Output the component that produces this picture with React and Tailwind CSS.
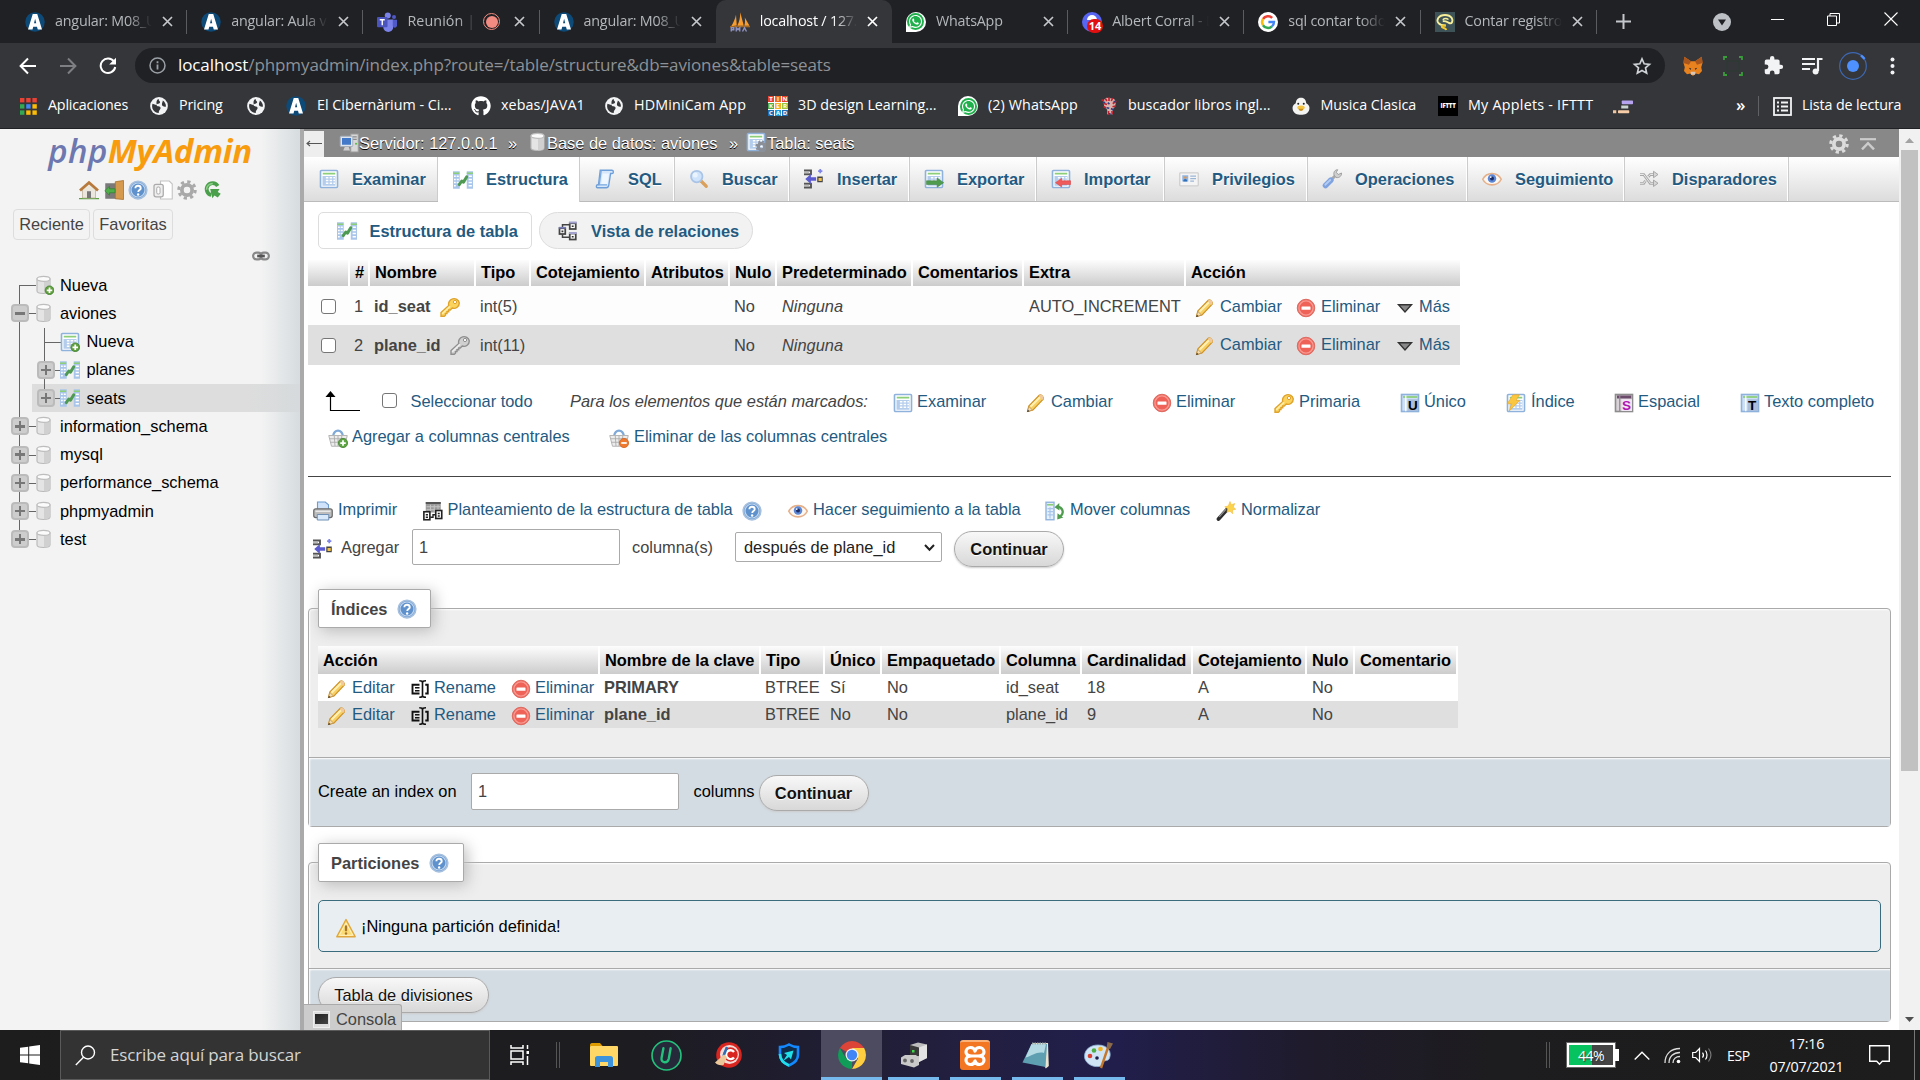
import React from "react";
import { FaGithub, FaWhatsapp } from "react-icons/fa";

/* ---------- small icon toolkit: 16-unit drawings ---------- */
const I = ({ c = "size-5", vb = "0 0 16 16", children }) => (
  <svg viewBox={vb} className={`${c} shrink-0`} fill="none">{children}</svg>
);
const Sheet = () => (
  <>
    <rect x="1.2" y="1.2" width="13.6" height="13.6" rx="0.8" fill="#fff" stroke="#8fb2dd" strokeWidth="1.3" />
    <rect x="3" y="3" width="10" height="1.4" fill="#8ccf78" />
    <rect x="2.8" y="5.6" width="10.4" height="7.8" fill="#b4cdec" />
    <path d="M5.5 7h2M8.5 7h2M11.5 7h1.3M5.5 9.2h2M8.5 9.2h2M11.5 9.2h1.3M5.5 11.4h2M8.5 11.4h2M11.5 11.4h1.3" stroke="#fff" strokeWidth="1.2" />
  </>
);
const Browse = (p) => <I {...p}><Sheet /></I>;
const Structure = (p) => (
  <I {...p}>
    <rect x="0" y="1" width="5.4" height="14" fill="#a9c6ea" />
    <rect x="11" y="1" width="5" height="14" fill="#a9c6ea" />
    <path d="M0 2.5h5M11 2.5h5" stroke="#8ccf78" strokeWidth="1.2" />
    <path d="M.8 5h1.4M3 5h1.6M.8 7.5h1.4M3 7.5h1.6M.8 10h1.4M3 10h1.6M.8 12.5h1.4M12.5 5h2.6M12.5 7.5h2.6M12.5 10h2.6M12.5 12.5h2.6" stroke="#fff" strokeWidth="1.2" />
    <path d="M5 11.7 7 8.8l1.400 .9L11 5.4" stroke="#4f9a52" strokeWidth="2.4" strokeLinecap="round" strokeLinejoin="round" />
  </I>
);
const Sql = () => (
  <I>
    <path d="M4.2 1h9.3c1.6 0 1.6 2.6 0 2.6h-1L11 13c-.3 1.6-1 2-2 2H2c-1.3 0-1.2-2.4.2-2.4h.6z" fill="#d6e7fa" stroke="#6f9fd8" strokeWidth="1.1" />
    <path d="M5 1.2 3.4 12.6h6.2" stroke="#7aaae0" strokeWidth="1" /><path d="M6 3.5h5.2L10 12H5z" fill="#eef6ff" />
  </I>
);
const Search = () => (
  <I>
    <path d="m9.8 9.8 4 4" stroke="#d9a15c" strokeWidth="2.6" strokeLinecap="round" />
    <circle cx="6.2" cy="6" r="4.6" fill="#cfe3fa" stroke="#a9c4e6" strokeWidth="1.4" /><circle cx="5" cy="4.8" r="2" fill="#eaf4ff" />
  </I>
);
const Insert = (p) => (
  <I {...p}>
    <path d="M0 1.2h5.6v3H0M0 11.8h5.6v3H0" stroke="#555" strokeWidth="1.5" />
    <path d="M0 2.7h4M0 13.2h4" stroke="#bbb" strokeWidth="1.2" />
    <path d="M1 8l4.500-4v2.600h4.200v2.800H5.500V12z" fill="#5b5bd0" />
    <rect x="10.600" y="6" width="4.400" height="4.600" fill="#444" /><rect x="11.600" y="7.200" width="2.600" height="2.400" fill="#f2c04c" />
    <path d="M13 0v3.400M11.300 1.700h3.400" stroke="#7f86e8" strokeWidth="1.400" />
  </I>
);
const Export = () => <I><Sheet /><path d="M2 9.4h8.5V7.2l5.2 3.7-5.2 3.7v-2.2H2z" fill="#4f9c4f" stroke="#3a7f3c" strokeWidth=".4" /></I>;
const Import = () => <I><Sheet /><path d="M15.7 9.4H8.5V7.4L3.6 10.9l4.9 3.5v-2h7.2z" fill="#ef5a5a" stroke="#d43c3c" strokeWidth=".4" /></I>;
const Card = () => (
  <I>
    <rect x=".6" y="3" width="14.8" height="10.4" rx=".6" fill="#f4f4f4" stroke="#cfcfcf" />
    <rect x="2.6" y="5" width="4.8" height="5" fill="#8fb6e6" /><circle cx="5" cy="6.8" r="1.1" fill="#d79a5f" /><path d="M3.4 10c0-2.6 3.2-2.6 3.2 0z" fill="#2f6fb8" />
    <path d="M9 5.6h4.6M9 7.6h4.6M9 9.6h3" stroke="#9ab6d6" strokeWidth="1" />
  </I>
);
const Wrench = () => (
  <I>
    <path d="M7.4 8.6 12 4" stroke="#a9a9a9" strokeWidth="2.4" />
    <path d="M9.600 4.800c-.6-2.600 1-4.300 3-4.200l-1.200 2 1.600 1.800 2.600-1.200c.2 2.200-1.600 4.200-4.400 3.600z" fill="#cfcfcf" stroke="#999" strokeWidth=".7" />
    <path d="M2.800 13.200 7 9" stroke="#7fa3e0" strokeWidth="4.400" strokeLinecap="round" /><path d="M2.600 12.600 6.600 8.800" stroke="#b4ccf2" strokeWidth="1.400" strokeLinecap="round" />
  </I>
);
const Eye = (p) => (
  <I {...p}>
    <path d="M.6 8.200C3.600 2.200 12.400 2.200 15.400 8.200 12.400 14.200 3.600 14.200.6 8.200z" fill="#fdf7f2" stroke="#e5b08a" strokeWidth="1.300" />
    <circle cx="8" cy="7.6" r="3.4" fill="#5b87d6" /><circle cx="8" cy="7.6" r="1.6" fill="#1d2d66" /><circle cx="7" cy="6.4" r=".7" fill="#fff" />
  </I>
);
const Shuffle = () => (
  <I>
    <path d="M.8 4.4h3L9 11.4h3M.8 11.4h3l1.4-2M7.4 6.2 9 4.4h3" stroke="#a8a8a8" strokeWidth="2.2" /><path d="M.8 4.4h3L9 11.4h3M.8 11.4h3l1.4-2M7.4 6.2 9 4.4h3" stroke="#e9e9e9" strokeWidth=".8" />
    <path d="M11.6 1.8 15.2 4.4l-3.6 2.6zM11.6 8.8l3.6 2.6-3.6 2.6z" fill="#d5d5d5" stroke="#a0a0a0" strokeWidth=".7" />
  </I>
);
const Relation = () => (
  <I>
    <path d="M3.6 5.4V3H9M3.6 10.6V13H9" stroke="#444" strokeWidth="1.2" />
    <rect x="1.200" y="5.800" width="4.600" height="4.600" fill="#fff" stroke="#444" strokeWidth="1.400" /><path d="M.6 5.400h5.800" stroke="#777bb5" strokeWidth="1.400" />
    <rect x="9.400" y="1.800" width="4.800" height="4.600" fill="#fff" stroke="#444" strokeWidth="1.400" /><path d="M8.800 1.200h6.200" stroke="#a3a2cf" strokeWidth="1.600" />
    <rect x="9.400" y="10" width="4.800" height="4.800" fill="#fff" stroke="#444" strokeWidth="1.400" /><path d="M8.800 9.600h6.200" stroke="#a3a2cf" strokeWidth="1.600" />
    <path d="M2.800 8.300h1.500M11 4.200h1.500M11 12.600h1.500" stroke="#333" strokeWidth="1.300" />
  </I>
);
const KeyShape = ({ a, b, s, c }) => (
  <I c={c}>
    <path d="M15.400 4.600a4.200 4.200 0 0 1-5.600 4.200L8.200 10.400H7v1.400H5.600v1.500H4.400V14.600L3.400 15.400H.8v-3l6.200-5.600A4.300 4.300 0 1 1 15.400 4.600z" fill={a} stroke={s} strokeWidth="1.100" />
    <path d="M1.800 13.400 8 7.400" stroke={b} strokeWidth="1.300" /><circle cx="12" cy="4" r="1.300" fill="#fff" stroke={s} strokeWidth=".8" />
  </I>
);
const Key = (p) => <KeyShape a="#fbd35c" b="#fff0b0" s="#dfa22b" {...p} />;
const KeyGray = (p) => <KeyShape a="#cfcfcf" b="#efefef" s="#8f8f8f" {...p} />;
const Pencil = (p) => (
  <I {...p}>
    <path d="M1.200 14.800 2.200 10.400 10.600 1.800c1.200-1 4.200 1.200 3.200 3.200L5.600 13.600z" fill="#f8cf63" stroke="#cf9226" strokeWidth=".9" />
    <path d="m3.600 11 7.600-7.600" stroke="#fff0b4" strokeWidth="1.600" /><path d="M10.400 2.400 11 1.600c1.200-.9 3.800 1.400 2.900 3l-.9 1z" fill="#f0c9a0" />
    <path d="M1.200 14.800 2.200 10.800l3 2.800z" fill="#f2dcb4" stroke="#b98a3e" strokeWidth=".5" /><path d="m.9 15.100.6-1.800 1.300 1.200z" fill="#333" />
  </I>
);
const Drop = (p) => (
  <I {...p}>
    <circle cx="8" cy="8" r="7" fill="#ee6257" stroke="#dd6a60" strokeWidth=".8" /><circle cx="8" cy="8" r="5.700" stroke="#f79a92" strokeWidth="1.100" />
    <rect x="4.400" y="6.700" width="7.200" height="2.600" rx=".4" fill="#fff" />
  </I>
);
const More = () => <I><path d="M2.800 5.400h10.400L8 11.200z" fill="#888" stroke="#333" strokeWidth="1.100" /></I>;
const Basket = ({ add }) => (
  <I>
    <path d="M4 6.5c1-6 7-6 8 0" stroke="#7fa9d8" strokeWidth="1.8" />
    <path d="M.6 6h14.8l-2 8.6H2.8z" fill="#ececec" stroke="#b5b5b5" strokeWidth=".8" />
    <path d="M1.4 8.6h13.2M2 11.4h12M5 6.4l.6 8M8 6.4v8M11 6.4l-.6 8" stroke="#a9a9a9" strokeWidth=".7" />
    <circle cx="12" cy="12" r="3.7" fill={add ? "#5fa544" : "#ee7a2f"} stroke={add ? "#3f7f2c" : "#d35f18"} strokeWidth=".6" />
    <path d={add ? "M12 9.8v4.4M9.8 12h4.4" : "M9.8 12h4.4"} stroke="#fff" strokeWidth="1.4" />
  </I>
);
const Printer = () => (
  <I>
    <path d="M3.6 7V.8h6.2L12.4 3v4z" fill="#cfe4fb" stroke="#6f9bd0" strokeWidth=".9" />
    <rect x=".6" y="6.200" width="14.800" height="7" rx="1.600" fill="#bdbdbd" stroke="#6b6b6b" strokeWidth="1" /><path d="M2 8.200h12" stroke="#efefef" />
    <path d="M3.4 10.8h9.2v4.4H3.4z" fill="#d8e9fc" stroke="#6f8fb4" strokeWidth=".8" />
  </I>
);
const Propose = () => (
  <I>
    <rect x="2.200" y=".8" width="12" height="8.400" fill="#9a9a9a" /><path d="M2.200 1.600h12" stroke="#555" strokeWidth="1.600" /><path d="M2.800 4.600h11M2.800 7h11M6 3v6M9 3v6M12 3v6" stroke="#c4c4c4" strokeWidth=".8" />
    <rect x=".7" y="8.600" width="4.800" height="6.400" fill="#fff" stroke="#222" strokeWidth="1.300" /><rect x="10.200" y="7.600" width="4.800" height="6.400" fill="#fff" stroke="#222" strokeWidth="1.300" />
    <path d="M5.800 13h2.200v-2h2M2.200 11h1.800M2.200 13h1.800M11.800 10h1.600M11.800 12h1.600" stroke="#222" strokeWidth="1.100" />
  </I>
);
const Help = (p) => (
  <I {...p}>
    <circle cx="8" cy="8" r="7" fill="#5f92cd" stroke="#a5bfdf" strokeWidth="1.400" /><circle cx="8" cy="8" r="5.600" stroke="#c3d7ee" strokeWidth=".9" />
    <path d="M5.9 6.6c0-2.8 4.3-2.6 4.3-.1 0 1.5-2 1.6-2 3" stroke="#fff" strokeWidth="1.5" /><circle cx="8.1" cy="11.6" r=".95" fill="#fff" />
  </I>
);
const MoveCols = () => (
  <I>
    <rect x=".8" y="1" width="6.4" height="14" fill="#e7f0fb" stroke="#8fb2dd" strokeWidth="1.1" /><path d="M1.6 3h5" stroke="#8ccf78" strokeWidth="1.3" /><path d="M2 6h4.6M2 8.5h4.6M2 11h4.6M4 5v9" stroke="#a9c6ea" />
    <path d="M9.4 4.8c4.6-.4 6.6 4.8 2.6 7.6" stroke="#4f9c4f" strokeWidth="1.8" /><path d="M11.4 1.6 7.6 5l4 2.6zM10 9.8l-.2 5 4.800-1.600z" fill="#4f9c4f" />
  </I>
);
const Wand = () => (
  <I>
    <path d="M2 14.400 9.200 6.400" stroke="#2d2d2d" strokeWidth="3" strokeLinecap="round" /><path d="M2.600 12.600 8 6.600" stroke="#909090" strokeWidth=".9" />
    <path d="m11.2.4 1 2.6 2.8-1-1.2 2.8 2 1.8-2.6.6.2 3-2.2-2-2.4.8.4-2.8L7 4.6l2.800-.6z" fill="#fbd34d" stroke="#f0b52c" strokeWidth=".4" />
  </I>
);
const Letter = ({ ch, tint }) => (
  <span className="relative size-5 shrink-0">
    <I>
      <rect x="1.2" y="1.2" width="13.6" height="13.6" fill={tint ? "#d9d3d9" : "#cfe0f5"} stroke={tint ? "#8d8d8d" : "#8fb2dd"} strokeWidth="1.3" />
      <path d="M2.4 3.2h11.4" stroke={tint ? "#6b4a6b" : "#8ccf78"} strokeWidth={tint ? 2.4 : 1.4} /><path d="M4.6 2v12.6" stroke={tint ? "#8d8d8d" : "#fff"} />
      <rect x="6" y="5" width="8.400" height="9.400" fill={tint ? "#f1e6f3" : "#a9bfdd"} />
    </I>
    <b className={`absolute top-[6px] left-[8px] text-[13.500px] leading-[14px] ${tint ? "text-[#b015b5]" : "text-black"}`}>{ch}</b>
  </span>
);
const IndexIcon = () => <I><Sheet /><path d="M5.6 1.4h5.2L8 5.8h3L2.6 14.400 4.400 8.600H1z" fill="#fbc740" stroke="#eba51f" strokeWidth=".5" /></I>;
const Rename = () => (
  <I>
    <path d="M7.600 4.600H2v7h5.600M12.200 4.600h2v7h-2" stroke="#111" strokeWidth="1.500" /><path d="M4 7h3.600M4 9.400h3.600" stroke="#111" strokeWidth="1.200" />
    <path d="M7.400 1.400c1.800 0 2.600.3 2.600 1.300v10.600c0 1-.8 1.300-2.600 1.300M12.800 1.400c-1.800 0-2.800.3-2.800 1.300M12.800 14.600c-1.800 0-2.800-.3-2.800-1.300" stroke="#111" strokeWidth="1.300" />
  </I>
);
const Warn = () => (
  <I>
    <path d="M8 1.2 15.4 15H.6z" fill="#fbdc74" stroke="#e0a63c" strokeWidth="1.1" strokeLinejoin="round" /><path d="M8 4 13.4 13.8H2.6z" stroke="#fff3c8" strokeWidth=".8" />
    <path d="M8 6v4.6" stroke="#a8762a" strokeWidth="1.8" /><circle cx="8" cy="12.3" r="1" fill="#a8762a" />
  </I>
);
const Db = ({ add, c }) => (
  <I c={c}>
    <path d="M2.4 3v9.8c0 2.6 10.4 2.6 10.4 0V3z" fill="#e4e4e4" stroke="#b9b9b9" strokeWidth=".9" />
    <path d="M8 5.2v9.4c2.6 0 4.6-.6 4.6-1.9V3.6z" fill="#d0d0d0" />
    <ellipse cx="7.6" cy="3.1" rx="5.2" ry="2" fill="#fbfbfb" stroke="#bdbdbd" strokeWidth=".9" />
    {add && <><circle cx="12.4" cy="12.2" r="3.5" fill="#5f9f3c" stroke="#3f7f2c" strokeWidth=".6" /><path d="M12.4 10v4.4M10.2 12.2h4.4" stroke="#fff" strokeWidth="1.4" /></>}
  </I>
);
const TableNew = () => <I><Sheet /><circle cx="12.2" cy="12.2" r="3.5" fill="#5f9f3c" stroke="#3f7f2c" strokeWidth=".6" /><path d="M12.2 10v4.4M10 12.2h4.4" stroke="#fff" strokeWidth="1.4" /></I>;
const Gear = ({ c = "size-5", f = "#b0b0b0", h = "#f3f3f3" }) => (
  <I c={c}>
    <circle cx="8" cy="8" r="6.6" stroke={f} strokeWidth="2.4" strokeDasharray="2.6 2.58" /><circle cx="8" cy="8" r="4.1" stroke={f} strokeWidth="3" /><circle cx="8" cy="8" r="2.4" fill={h} />
  </I>
);
const Server = () => (
  <I>
    <rect x="9.4" y=".8" width="6" height="14.4" fill="#d8d8d8" stroke="#9a9a9a" strokeWidth=".8" /><path d="M10.6 3h3.6M10.6 5h3.6" stroke="#8b8b8b" /><circle cx="13.6" cy="8.6" r=".8" fill="#4bbf3a" />
    <rect x="1" y="2.6" width="10" height="8.2" rx=".6" fill="#dfe5ee" stroke="#a7b0bd" strokeWidth=".8" /><rect x="2.4" y="4" width="7.2" height="5.4" fill="#4379c9" /><path d="M3.4 14h5.4l-1-2.8H4.6z" fill="#cfcfcf" />
  </I>
);

/* ---------- browser chrome ---------- */
const Ang = () => (
  <I>
    <circle cx="8" cy="8" r="7.8" fill="#0e4a78" /><path d="M6.2 1.6h3.6L13.6 14h-3.4l-.6-2.2H6.6L6 14H2.4zM7.2 9h1.8l-.9-3.6z" fill="#fff" fillRule="evenodd" />
  </I>
);
const Teams = () => (
  <I>
    <circle cx="8.6" cy="2.8" r="2.4" fill="#7b83eb" /><circle cx="13.6" cy="4" r="1.6" fill="#5059c9" /><path d="M5 6h8v6a4 4 0 0 1-8 0z" fill="#7b83eb" /><path d="M12.6 6.2H16v4.4c0 2.6-3.4 2.6-3.4 0z" fill="#5059c9" />
    <rect x="0" y="4" width="8.4" height="8.2" rx=".8" fill="#4b53bc" /><path d="M2.2 6.2h4M4.2 6.2v4.4" stroke="#fff" strokeWidth="1.1" />
  </I>
);
const Pma = () => (
  <I>
    <path d="M1 11.4C3 8 4.2 5 4.8 2.2l.6 8.6zM5.8 11C7.6 7.6 8.2 4 8.2.2L11 11zM11.4 11c.8-2.2.7-4.4.4-6.6L15.6 11z" fill="#f89c2e" />
    <path d="M0 11.8h16" stroke="#c77716" strokeWidth=".8" /><path d="M1 15.6v-3h2v1.6H1M5 15.6v-3l1.4 1.6 1.4-1.6v3M10 15.6l1.6-3 1.6 3" stroke="#8f93c4" strokeWidth="1.1" />
  </I>
);
const Wa = () => (
  <span className="flex size-5 shrink-0 items-center justify-center rounded-full rounded-bl-[3px] bg-white"><span className="flex size-[17px] items-center justify-center rounded-full bg-[#1fb04c]"><FaWhatsapp className="size-[15px] text-white" /></span></span>
);
const Discord = () => (
  <span className="relative size-5 shrink-0 rounded-full bg-[#5865f2]">
    <span className="absolute top-[3px] left-[5px] h-[5px] w-[10px] rounded-t-full bg-white" />
    <span className="absolute right-[-1px] bottom-[-1px] flex h-[14px] w-[16px] items-center justify-center rounded-full bg-[#e01010] text-[11px] leading-none font-bold text-white">14</span>
  </span>
);
const Google = () => (
  <I vb="0 0 20 20">
    <circle cx="10" cy="10" r="10" fill="#fff" />
    <path d="M14.2 5.9A5.9 5.9 0 0 0 5 7" stroke="#ea4335" strokeWidth="2.5" /><path d="M5 7a5.9 5.9 0 0 0 0 6.2" stroke="#fbbc05" strokeWidth="2.5" />
    <path d="M5 13.2a5.9 5.9 0 0 0 8.9 1.2" stroke="#34a853" strokeWidth="2.5" /><path d="M13.9 14.4A5.8 5.8 0 0 0 16 10h-5.6" stroke="#4285f4" strokeWidth="2.4" />
  </I>
);
const Brain = () => (
  <I><rect width="16" height="16" fill="#3e5357" /><path d="M8.600 10.800C3 11 .8 7.600 2.600 4.800 4.800 1.600 11.200 1.600 13.400 4.800c1.400 2.600 0 4.600-1.600 4.200-2-.6-2.400-2-5.600-1.600" stroke="#f7ee9a" strokeWidth="1.500" /><path d="M8.600 10.800c-3-.2-3.800.8-2.600 1.600.8.600 2.600.2 3 2" stroke="#f2c92e" strokeWidth="1.600" /><path d="M6.200 6.200c1.600-1.400 3.200-1.200 4.600-.2" stroke="#f7ee9a" strokeWidth="1.200" /></I>
);
const Globe = () => (
  <I c="size-[18px]"><circle cx="8" cy="8" r="7.9" fill="#f1f3f4" /><path d="M8 1.800c-1 1.600 1.800 2 .8 3.400C8 6.400 5.800 5.800 5.800 7.400c0 1.400 3.600.4 3.600 2.400 0 1.600-1.600 1.600-1.600 4.400-4.800-.2-6.800-4.600-5.600-8.200l4 1.400C5.200 4.400 6 2 8 1.800zM11.400 3.200c1.600 1 2.800 3 2.800 5.200-1.600.6-3.600-.4-3.600-1.800 0-1.200.6-1.800.8-3.400z" fill="#35363a" /></I>
);
const Apps = () => (
  <I c="size-[17px]" vb="0 0 17 17">
    {["#ea4335", "#ea4335", "#ea4335", "#34a853", "#4285f4", "#fbbc05", "#34a853", "#fbbc05", "#fbbc05"].map((f, i) => (
      <rect key={i} x={(i % 3) * 6.2} y={Math.floor(i / 3) * 6.2} width="4.4" height="4.4" fill={f} />
    ))}
  </I>
);
const Tinker = () => (
  <span className="grid size-5 shrink-0 grid-cols-3 gap-px bg-white text-center text-[6px] leading-[6px] font-bold text-white">
    {[["T", "bg-[#e9442f]"], ["I", "bg-[#f06a25]"], ["N", "bg-[#e9442f]"], ["K", "bg-[#4caf50]"], ["E", "bg-[#f6b21c]"], ["R", "bg-[#9bc53d]"], ["C", "bg-[#1a6fb5]"], ["A", "bg-[#2196d6]"], ["D", "bg-[#1a6fb5]"]].map(([t, k]) => (
      <span key={t} className={k}>{t}</span>
    ))}
  </span>
);
const Bust = () => (
  <I><path d="M3.400 3.400 6 1.400l3 .4L12.200 2.400 13.400 5.400l-.6 3.200-1.800 2 .2 4H6.400L6.600 11 4.200 8.600z" fill="#d9b3ac" /><path d="M2 3l2 1M4 6l2.4.8M5 2l1.4 2M8 1v3M11 1.6 9.8 4M13.8 4 11 6.2M13.4 8l-2.6.6M3.600 8.400l2 1M7.600 12v3M10.400 12l.2 2.600" stroke="#c2202e" strokeWidth="1.300" /><path d="M3 5.4 5 5M7 5.4l1.4 1M11.600 4.400l2 .2M6 9.400l2.200.4M9.600 10l2 1.200M8.600 13.600v1.400" stroke="#2a3f86" strokeWidth="1.300" /></I>
);
const Duck = () => (
  <I><path d="M8 1.4c3 0 4 2 4.2 4.4 2.2 1 3 3 2.4 5.2-.8 3-3.4 4-6.6 4s-5.8-1-6.6-4c-.6-2.2.2-4.2 2.4-5.2C4 3.400 5 1.400 8 1.400z" fill="#f4f4f2" /><ellipse cx="8" cy="9.200" rx="3" ry="1.600" fill="#f4c542" /><path d="M6 10.200C6.600 12.600 9.400 12.600 10 10.200z" fill="#c98f1c" /><circle cx="5.800" cy="6.200" r=".8" fill="#222" /><circle cx="10.200" cy="6.200" r=".8" fill="#222" /></I>
);
const Ifttt = () => <span className="flex size-5 shrink-0 items-center justify-center bg-black text-[6px] font-black tracking-[-0.2px] text-white">IFTTT</span>;
const Bars = () => (
  <I><rect x="7" y="3.600" width="9" height="3" rx=".6" fill="#b7a4f0" /><rect x="6.600" y="7.600" width="5.600" height="2.400" fill="#c9d3d0" /><rect x="0" y="11.400" width="2.600" height="2.400" fill="#f1c7a0" /><rect x="4" y="11.400" width="9" height="2.400" rx=".6" fill="#f7cda8" /></I>
);
const X = ({ c = "text-[#c4c7cb]" }) => <I c={`size-[11px] ${c}`} vb="0 0 11 11"><path d="m1 1 9 9M10 1l-9 9" stroke="currentColor" strokeWidth="1.7" /></I>;

const tabs = [
  ["angular: M08_U", Ang], ["angular: Aula vir", Ang], ["Reunión | M", Teams], ["angular: M08_U", Ang], ["localhost / 127.", Pma],
  ["WhatsApp", Wa], ["Albert Corral - D", Discord], ["sql contar todos", Google], ["Contar registros", Brain],
];
const UI = "font-['Open_Sans',sans-serif]";

const TabStrip = () => (
  <div className="flex h-[43px] shrink-0 bg-[#202124] pl-[11px]">
    {tabs.map(([t, Ic], i) => {
      const on = i === 4;
      return (
        <div key={i} className={`relative flex w-[176.2px] shrink-0 items-center pl-[14px] ${on ? "rounded-t-[10px] bg-[#35363a]" : ""}`}>
          <Ic />
          <div className={`mt-[-2px] ml-[10px] overflow-hidden text-[14.3px] whitespace-nowrap ${i === 2 ? "w-[69px] tracking-[0.1px]" : "w-[97px] tracking-[-0.2px]"} ${on ? "text-white" : "text-[#b4b8bc]"} [mask-image:linear-gradient(to_right,black_75%,transparent)]`}>{t}</div>
          {i === 2 && <span className="ml-[7px] flex size-[17px] items-center justify-center rounded-full border border-[#f28b82]"><span className="size-[12px] rounded-full bg-[#f28b82]" /></span>}
          <div className={i === 2 ? "ml-[14px]" : "ml-[10px]"}><X c={on ? "text-white" : "text-[#c4c7cb]"} /></div>
          {i !== 3 && i !== 4 && <span className="absolute top-[10px] right-0 h-[24px] w-px bg-[#5a5c60]" />}
        </div>
      );
    })}
    <div className="flex grow items-center pl-[19px]">
      <I c="size-[15px]" vb="0 0 15 15"><path d="M7.5 0v15M0 7.5h15" stroke="#c4c7cb" strokeWidth="2" /></I>
      <I c="ml-[82px] size-[18px]" vb="0 0 18 18"><circle cx="9" cy="9" r="9" fill="#bdc1c6" /><path d="M5 6.600h8L9 12.600z" fill="#202124" /></I>
      <span className="mt-[-5px] ml-[40px] h-px w-[13px] bg-white" />
      <I c="mt-[-5px] ml-[43px] size-[13px]" vb="0 0 13 13"><path d="M.5 3h9v9.500h-9zM3 3V.5h9.500V10H10" stroke="#fff" /></I>
      <I c="mt-[-5px] ml-[44px] size-[14px]" vb="0 0 14 14"><path d="m.5.5 13 13M13.500.5l-13 13" stroke="#fff" strokeWidth="1.100" /></I>
    </div>
  </div>
);

const Toolbar = () => (
  <div className="flex h-[45px] shrink-0 items-center bg-[#35363a] pl-[19px]">
    <I c="size-[18px]" vb="0 0 18 18"><path d="M17 9H2M9 1.500 1.600 9 9 16.500" stroke="#fff" strokeWidth="2" /></I>
    <I c="ml-[22px] size-[18px]" vb="0 0 18 18"><path d="M1 9h15M9 1.500 16.400 9 9 16.500" stroke="#7d7f83" strokeWidth="2" /></I>
    <I c="ml-[22px] size-[18px]" vb="0 0 18 18"><path d="M15 4.600A7.300 7.300 0 1 0 16.200 10" stroke="#fff" strokeWidth="2" /><path d="M17 .8v6.800h-6.800z" fill="#fff" /></I>
    <div className="ml-[18px] flex h-[35px] w-[1530px] items-center rounded-full bg-[#202124] pl-[14px]">
      <I c="size-[17px]" vb="0 0 17 17"><circle cx="8.500" cy="8.500" r="7.500" stroke="#9aa0a6" strokeWidth="1.500" /><path d="M8.500 7.500v5M8.500 4.300v1.900" stroke="#9aa0a6" strokeWidth="1.800" /></I>
      <div className="mt-[-1px] ml-[12px] w-[1454px] text-[17px] tracking-[-0.1px] whitespace-nowrap text-[#8e9297]"><span className="text-white">localhost</span>/phpmyadmin/index.php?route=/table/structure&amp;db=aviones&amp;table=seats</div>
      <I c="size-[20px]" vb="0 0 24 24"><path d="m12 3.500 2.600 5.900 6.400.6-4.800 4.300 1.400 6.300-5.600-3.300-5.600 3.300 1.400-6.300L3 10l6.400-.6z" stroke="#cfd2d6" strokeWidth="2" /></I>
    </div>
    <I c="ml-[18px] size-[20px]"><path d="M1 .6 6.400 4.200h3.200L15 .6l.6 5L14.600 9l.6 3-2.400 2.600-2.600-.6L8 16l-2.200-2-2.600.6L.8 12l.6-3L.4 5.600z" fill="#e8821e" /><path d="M1 .6 6.400 4.200 4.800 7 .4 5.600zM15 .6 9.600 4.200 11.200 7l4.400-1.400z" fill="#a8551e" /><path d="M4.600 9.400l2 .6-.6 1.200zM11.400 9.400l-2 .6.6 1.200z" fill="#2b2b2b" /><path d="M6 12.600h4l-.4 2.400H6.400z" fill="#d8c6b8" /></I>
    <I c="ml-[20px] size-[20px]" vb="0 0 20 20"><path d="M1 4V1h3M16 1h3v3M19 16v3h-3M4 19H1v-3" stroke="#3b9b3b" strokeWidth="1.800" /><rect x="4" y="5" width="12" height="10" stroke="#2b3b2e" strokeWidth="1" /></I>
    <I c="ml-[20px] size-[21px]" vb="0 0 24 24"><path d="M20.500 11H19V7a2 2 0 0 0-2-2h-4V3.500a2.500 2.500 0 0 0-5 0V5H4a2 2 0 0 0-2 2v3.800h1.500a2.700 2.700 0 0 1 0 5.400H2V20a2 2 0 0 0 2 2h3.800v-1.500a2.700 2.700 0 0 1 5.400 0V22H17a2 2 0 0 0 2-2v-4h1.500a2.500 2.500 0 0 0 0-5z" fill="#f1f3f4" /></I>
    <I c="ml-[17px] size-[22px]" vb="0 0 22 22"><path d="M1 4h13M1 9h13M1 14h8" stroke="#f1f3f4" strokeWidth="2.200" /><path d="M17 16V4h4.500" stroke="#f1f3f4" strokeWidth="2.200" /><circle cx="14.600" cy="16.600" r="3" fill="#f1f3f4" /></I>
    <I c="ml-[16px] size-[28px]" vb="0 0 28 28"><circle cx="14" cy="14" r="13.300" stroke="#3d68b3" strokeWidth="1.200" /><circle cx="14" cy="14" r="6" fill="#4d90fe" /><path d="M22 3.500A13 13 0 0 1 25.500 7" stroke="#4d90fe" strokeWidth="2.500" /></I>
    <I c="ml-[23px] h-[18px] w-[5px]" vb="0 0 5 18"><circle cx="2.500" cy="2.500" r="2" fill="#f1f3f4" /><circle cx="2.500" cy="9" r="2" fill="#f1f3f4" /><circle cx="2.500" cy="15.500" r="2" fill="#f1f3f4" /></I>
  </div>
);

const Mark = ({ w, gap = "gap-[10px]", icon, children, t = "tracking-[-0.2px]" }) => (
  <div className={`flex shrink-0 items-center ${gap} ${w}`}>{icon}<span className={`mt-[-2px] text-[14.3px] whitespace-nowrap text-white ${t}`}>{children}</span></div>
);
const Bookmarks = () => (
  <div className="flex h-[41px] shrink-0 items-center border-b border-[#202124] bg-[#35363a] pb-[4px] pl-[20px]">
    <Mark w="w-[130px]" gap="gap-[11px]" icon={<Apps />}>Aplicaciones</Mark>
    <Mark w="w-[97px]" gap="gap-[11px]" icon={<Globe />}>Pricing</Mark>
    <Mark w="w-[39px]" icon={<Globe />}></Mark>
    <Mark w="w-[185px]" gap="gap-[11px]" icon={<Ang />} t="tracking-[0px]">El Cibernàrium - Ci...</Mark>
    <Mark w="w-[134px]" icon={<FaGithub className="size-5 text-white" />} t="tracking-[0.08px]">xebas/JAVA1</Mark>
    <Mark w="w-[163px]" gap="gap-[11px]" icon={<Globe />} t="tracking-[0.15px]">HDMiniCam App</Mark>
    <Mark w="w-[190px]" icon={<Tinker />} t="tracking-[-0.03px]">3D design Learning...</Mark>
    <Mark w="w-[141px]" icon={<Wa />} t="tracking-[0.1px]">(2) WhatsApp</Mark>
    <Mark w="w-[192px]" gap="gap-[9px]" icon={<Bust />} t="tracking-[0.02px]">buscador libros ingl...</Mark>
    <Mark w="w-[147px]" gap="gap-[9.500px]" icon={<Duck />} t="tracking-[-0.05px]">Musica Clasica</Mark>
    <Mark w="w-[175px]" icon={<Ifttt />} t="tracking-[0.25px]">My Applets - IFTTT</Mark>
    <Mark w="w-[123px]" icon={<Bars />}></Mark>
    <span className="mt-[-2px] w-[22px] text-[17px] font-semibold text-white">»</span>
    <span className="h-[20px] w-px bg-[#5f6165]" />
    <I c="mr-[10px] ml-[14px] size-[19px]" vb="0 0 19 19"><rect x="1" y="1" width="17" height="17" stroke="#f1f3f4" strokeWidth="1.800" /><path d="M4 5.500h2M4 9.500h2M4 13.500h2M8 5.500h7M8 9.500h7M8 13.500h7" stroke="#f1f3f4" strokeWidth="1.800" /></I>
    <span className="mt-[-2px] text-[14.300px] tracking-[-0.12px] whitespace-nowrap text-white">Lista de lectura</span>
  </div>
);

/* ---------- phpMyAdmin navigation ---------- */
const Expander = ({ minus }) => (
  <span className="relative z-10 flex size-[18px] shrink-0 items-center justify-center rounded-[4px] border-2 border-[#bbb] bg-[#cdcdcd]">
    <span className="absolute h-[2.500px] w-[10px] bg-[#777]" />
    {!minus && <span className="absolute h-[10px] w-[2.500px] bg-[#777]" />}
  </span>
);
const TreeRoot = ({ name, first, last, minus }) => (
  <div className="relative flex h-[28.250px] items-center pl-[11px]">
    <span className={`absolute left-[19px] w-px bg-[#666] ${first ? "top-1/2 h-1/2" : last ? "top-0 h-1/2" : "top-0 h-full"}`} />
    <span className="absolute top-[14px] left-[19px] h-px w-[17px] bg-[#666]" />
    {first ? <span className="w-[18px]" /> : <Expander minus={minus} />}
    <Db add={first} c="relative ml-[5px] size-5" />
    <span className="ml-[6px]">{name}</span>
  </div>
);
const TreeLeaf = ({ name, kind, sel }) => (
  <div className="relative flex h-[28.250px] items-center">
    {sel && <span className="absolute right-0 left-[32px] h-full bg-[linear-gradient(to_right,#ddd_80%,#d6dadc)]" />}
    <span className="absolute top-0 left-[19px] h-full w-px bg-[#666]" />
    <span className={`absolute top-0 left-[44px] w-px bg-[#666] ${sel ? "h-1/2" : "h-full"}`} />
    <span className="absolute top-[14px] left-[44px] h-px w-[17px] bg-[#666]" />
    <span className="relative ml-[37px] w-[23px]">{kind !== "new" && <Expander />}</span>
    <span className="relative">{kind === "new" ? <TableNew /> : <Structure />}</span>
    <span className="relative ml-[6.500px]">{name}</span>
  </div>
);
const Sidebar = () => (
  <aside className="flex w-[304px] shrink-0 flex-col border-r-4 border-[#aaa] bg-[linear-gradient(to_right,#f3f3f3_87%,#d6dcdf_100%)] text-black">
    <div className="flex h-[48px] items-center justify-center pb-[5px] font-['Open_Sans',sans-serif] text-[33px] leading-none font-semibold tracking-[0.5px] italic">
      <span className="text-[#6c78af]">php</span><span className="font-bold tracking-[-0.3px] text-[#f89c0e]">MyAdmin</span>
    </div>
    <div className="ml-[79px] flex h-[26px] items-center gap-[4.500px]">
      <I><path d="M0 14.400h16v1H0z" fill="#5fa044" /><path d="M2.800 7.600 8 3l5.200 4.600v6.800H2.800z" fill="#ece7dc" stroke="#b9ad97" strokeWidth=".6" /><rect x="6.400" y="9" width="3.200" height="5.400" fill="#777" /><path d="M.8 8.400 8 2l7.200 6.400" stroke="#b87a3c" strokeWidth="2.200" /></I>
      <I><rect x="1" y="2.600" width="9" height="12.400" fill="#7a7a7a" /><path d="M9 1.400 15.600.4v15.200L9 15z" fill="#d69a4e" stroke="#a56c26" strokeWidth=".6" /><path d="M.6 8.600 4.400 5v2h4.400v3.200H4.400v2z" fill="#4fae4a" stroke="#2f7d2c" strokeWidth=".5" /></I>
      <Help />
      <I><path d="M6 .8h7l2.400 2.400v12H6z" fill="#fff" stroke="#c4c4c4" strokeWidth=".9" /><rect x=".8" y="3.400" width="7.400" height="10" rx="1.600" fill="#eee" stroke="#aaa" /><rect x="3" y="5.600" width="2.600" height="5.600" rx="1" fill="#fff" stroke="#aaa" strokeWidth=".8" /></I>
      <Gear f="#a9a9a9" />
      <I><path d="M12.600 4.800A4.800 4.800 0 1 0 7.400 12" stroke="#4a9f4a" strokeWidth="3" /><path d="M6.600 7.200h7.400l-1.400 2.400L15 11l-2.400 3-2.600-1.600-1.800 2.200z" fill="#4a9f4a" /><path d="M8.600 2.800a5 5 0 0 0-5 5" stroke="#8fd08a" strokeWidth="1.200" /></I>
    </div>
    <div className="mt-[6px] ml-[13px] flex gap-[3px] text-[#444]">
      <span className="flex h-[31px] w-[77px] items-center justify-center rounded-[4px] border border-[#ddd]">Reciente</span>
      <span className="flex h-[31px] w-[80px] items-center justify-center rounded-[4px] border border-[#ddd]">Favoritas</span>
    </div>
    <div className="flex h-[31px] items-center pt-[1px] pl-[252px]">
      <I c="size-[18px]"><rect x="1" y="5" width="7.600" height="6" rx="3" stroke="#888" strokeWidth="1.900" /><rect x="7.400" y="5" width="7.600" height="6" rx="3" stroke="#888" strokeWidth="1.900" /><path d="M4.600 8h6.800" stroke="#555" strokeWidth="2.400" /></I>
    </div>
    <TreeRoot name="Nueva" first />
    <TreeRoot name="aviones" minus />
    <TreeLeaf name="Nueva" kind="new" />
    <TreeLeaf name="planes" />
    <TreeLeaf name="seats" sel />
    <TreeRoot name="information_schema" />
    <TreeRoot name="mysql" />
    <TreeRoot name="performance_schema" />
    <TreeRoot name="phpmyadmin" />
    <TreeRoot name="test" last />
  </aside>
);

/* ---------- phpMyAdmin page ---------- */
const menu = [
  ["Examinar", Browse, "w-[134px]"], ["Estructura", Structure, "w-[142px]"], ["SQL", Sql, "w-[94px]"], ["Buscar", Search, "w-[115px]"],
  ["Insertar", Insert, "w-[120px]"], ["Exportar", Export, "w-[127px]"], ["Importar", Import, "w-[128px]"], ["Privilegios", Card, "w-[143px]"],
  ["Operaciones", Wrench, "w-[160px]"], ["Seguimiento", Eye, "w-[157px]"], ["Disparadores", Shuffle, "w-[164px]"],
];
const Crumbs = () => (
  <div className="flex h-[28px] items-center bg-[#888] pt-px text-white [text-shadow:0_1px_0_#000]">
    <span className="flex h-[26px] w-[20px] items-center justify-center bg-[#eee]"><I c="h-[9px] w-[16px]" vb="0 0 16 9"><path d="M16 4.500H1M4 2 1 4.500 4 7" stroke="#555" strokeWidth="1.100" /></I></span>
    <span className="ml-[15px] flex w-[169px]"><span className="mt-[-1px]"><Server /></span><span>Servidor: 127.0.0.1</span></span>
    <span className="w-[20px]">»</span>
    <span className="flex w-[201px]"><span className="mt-[-2px]"><Db c="size-5" /></span><span className="ml-[-1px]">Base de datos: aviones</span></span>
    <span className="w-[17px]">»</span>
    <span className="flex w-[1083px]"><span className="mt-[-2px]"><I><Sheet /><circle cx="12.400" cy="11.600" r="2.600" stroke="#8a8f98" strokeWidth="2.600" /><circle cx="12.400" cy="11.600" r="4.200" stroke="#8a8f98" strokeWidth="1.200" strokeDasharray="1.650 1.650" /></I></span><span className="ml-[1px]">Tabla: seats</span></span>
    <Gear f="#dcdcdc" h="#888" />
    <I c="ml-[11px] h-[12px] w-[16px]" vb="0 0 16 12"><path d="M0 1.200h16" stroke="#ccc" strokeWidth="2.200" /><path d="M2 11.400 8 5.200l6 6.200" stroke="#ccc" strokeWidth="2.400" /></I>
  </div>
);
const Menu = () => (
  <div className="flex h-[45px] border-b border-[#bbb] bg-gradient-to-b from-white to-[#dcdcdc] font-bold text-[#235a81]">
    {menu.map(([t, Ic, w], i) => (
      <div key={t} className={`flex shrink-0 items-center border-r pl-[15px] ${w} ${i === 1 ? "h-[45px] border-[#ccc] bg-white" : i === 0 ? "border-[#ccc]" : "border-white shadow-[1px_0_0_#ccc]"}`}>
        <Ic /><span className="ml-[13px] [text-shadow:0_1px_0_#fff]">{t}</span>
      </div>
    ))}
  </div>
);
const Link = ({ w, icon, gap = "gap-[5px]", children }) => (
  <span className={`flex shrink-0 items-start ${gap} ${w}`}><span className="mt-[2px] flex">{icon}</span><span className="mt-px whitespace-nowrap text-[#235a81]">{children}</span></span>
);
const Check = ({ c = "" }) => <span className={`size-[15px] shrink-0 rounded-[3px] border border-[#767676] bg-white ${c}`} />;

const cols = [["", "w-[42px]"], ["#", "w-[20px]"], ["Nombre", "w-[106px]"], ["Tipo", "w-[55px]"], ["Cotejamiento", "w-[115px]"], ["Atributos", "w-[84px]"], ["Nulo", "w-[47px]"], ["Predeterminado", "w-[136px]"], ["Comentarios", "w-[111px]"], ["Extra", "w-[162px]"], ["Acción", "w-[276px]"]];
const Head = ({ data, h, pb = "" }) => (
  <div className={`flex bg-white font-bold text-black ${h}`}>
    {data.map(([t, w], i) => <div key={i} className={`flex shrink-0 items-center border-r-2 border-white bg-gradient-to-b from-[#fdfdfd] to-[#ccc] bg-clip-padding pl-[5px] whitespace-nowrap ${pb} ${w}`}>{t}</div>)}
  </div>
);
const Row = ({ n, name, keyIcon, type, extra, bg, h }) => (
  <div className={`flex items-center ${h} ${bg}`}>
    <span className="w-[46px] shrink-0 pl-[13px]"><Check c="block" /></span>
    <span className="w-[20px] shrink-0">{n}</span>
    <span className="flex w-[106px] shrink-0 items-center font-bold">{name}<span className="ml-[9px]">{keyIcon}</span></span>
    <span className="w-[254px] shrink-0">{type}</span>
    <span className="w-[48px] shrink-0">No</span>
    <span className="w-[247px] shrink-0 italic">Ninguna</span>
    <span className="w-[166px] shrink-0">{extra}</span>
    <Link w="w-[101px]" icon={<Pencil />}>Cambiar</Link>
    <Link w="w-[99px]" icon={<Drop />}>Eliminar</Link>
    <Link w="w-[62px]" gap="gap-[4px]" icon={<More />}>Más</Link>
  </div>
);
const idxCols = [["Acción", "w-[282px]"], ["Nombre de la clave", "w-[161px]"], ["Tipo", "w-[64px]"], ["Único", "w-[57px]"], ["Empaquetado", "w-[119px]"], ["Columna", "w-[81px]"], ["Cardinalidad", "w-[111px]"], ["Cotejamiento", "w-[114px]"], ["Nulo", "w-[48px]"], ["Comentario", "w-[103px]"]];
const IdxRow = ({ name, uniq, col, card, bg }) => (
  <div className={`flex h-[27px] items-center pl-[9px] ${bg}`}>
    <Link w="w-[83px]" icon={<Pencil />}>Editar</Link>
    <Link w="w-[101px]" gap="gap-[4px]" icon={<Rename />}>Rename</Link>
    <Link w="w-[93px]" gap="gap-[4px]" icon={<Drop />}>Eliminar</Link>
    <b className="w-[161px]">{name}</b>
    <span className="w-[65px]">BTREE</span>
    <span className="w-[57px]">{uniq}</span>
    <span className="w-[119px]">No</span>
    <span className="w-[81px]">{col}</span>
    <span className="w-[111px]">{card}</span>
    <span className="w-[114px]">A</span>
    <span>No</span>
  </div>
);
const Legend = ({ w, children }) => (
  <div className={`absolute top-[-20px] left-[9px] flex h-[39px] items-center gap-[10px] rounded-[2px] border border-[#aaa] bg-white pt-px pl-[12px] font-bold text-[#444] shadow-[3px_3px_15px_#bbb] ${w}`}>{children}<Help c="size-[20px]" /></div>
);
const Btn = ({ w, b = "font-bold", children }) => (
  <span className={`flex h-[36px] shrink-0 items-center justify-center rounded-full border border-[#aaa] bg-gradient-to-b from-[#f8f8f8] to-[#d8d8d8] text-[#111] shadow-[0_1px_2px_#ccc] [text-shadow:0_1px_0_#fff] ${w} ${b}`}>{children}</span>
);
const Field = ({ h = "h-[36px]" }) => <span className={`flex w-[208px] shrink-0 items-center rounded-[2px] border border-[#aaa] bg-white pl-[6px] text-[#444] ${h}`}>1</span>;

const Main = () => (
  <main className="flex w-[1595px] shrink-0 flex-col overflow-hidden bg-white text-[#444]">
    <Crumbs />
    <Menu />
    <div className="mt-[10px] ml-[14px] flex gap-[7px] font-bold text-[#235a81]">
      <div className="flex h-[37px] w-[214px] items-center gap-[12.500px] rounded-[5px] border border-[#ddd] pt-px pl-[18px]"><Structure />Estructura de tabla</div>
      <div className="flex h-[37px] w-[214px] items-center gap-[13px] rounded-full border border-[#ddd] bg-[#f2f2f2] pt-px pl-[18px]"><Relation />Vista de relaciones</div>
    </div>
    <div className="mt-[11px] ml-[4px] w-[1152px]">
      <Head data={cols} h="h-[26px] overflow-hidden" pb="pb-[2px]" />
      <Row h="h-[39px] pt-[2px]" n="1" name="id_seat" keyIcon={<Key />} type="int(5)" extra="AUTO_INCREMENT" bg="bg-[#fdfdfd]" />
      <Row h="h-[40px]" n="2" name="plane_id" keyIcon={<KeyGray />} type="int(11)" extra="" bg="bg-[#dfdfdf]" />
    </div>
    <div className="mt-[26px] flex h-[24px] items-start pl-[20px]">
      <I c="h-[21px] w-[38px]" vb="0 0 38 21"><path d="M6.500 5v14.500H36" stroke="#000" strokeWidth="1.200" /><path d="M6.500 0 11.500 6h-10z" fill="#000" /></I>
      <Check c="mt-[2px] ml-[20px]" />
      <span className="mt-px ml-[13.500px] w-[159.500px] text-[#235a81]">Seleccionar todo</span>
      <span className="mt-px w-[323px] italic">Para los elementos que están marcados:</span>
      <Link w="w-[133px]" gap="gap-[4px]" icon={<Browse />}>Examinar</Link>
      <Link w="w-[126px]" icon={<Pencil />}>Cambiar</Link>
      <Link w="w-[122px]" gap="gap-[4px]" icon={<Drop />}>Eliminar</Link>
      <Link w="w-[126px]" icon={<Key />}>Primaria</Link>
      <Link w="w-[106px]" gap="gap-[4px]" icon={<Letter ch="U" />}>Único</Link>
      <Link w="w-[108px]" gap="gap-[5px]" icon={<IndexIcon />}>Índice</Link>
      <Link w="w-[126px]" gap="gap-[4px]" icon={<Letter ch="S" tint />}>Espacial</Link>
      <Link w="w-[126px]" gap="gap-[4px]" icon={<Letter ch="T" />}>Texto completo</Link>
    </div>
    <div className="mt-[11px] flex h-[24px] items-start pl-[24px]">
      <Link w="w-[281px]" gap="gap-[4px]" icon={<Basket add />}>Agregar a columnas centrales</Link>
      <Link w="w-[300px]" icon={<Basket />}>Eliminar de las columnas centrales</Link>
    </div>
    <div className="mt-[26px] ml-[4px] h-[1px] w-[1583px] bg-[#444]" />
    <div className="mt-[22px] flex h-[24px] items-start pl-[9px]">
      <Link w="w-[110px]" icon={<Printer />}>Imprimir</Link>
      <Link w="w-[319px]" gap="gap-[4.500px]" icon={<Propose />}>Planteamiento de la estructura de tabla</Link>
      <Link w="w-[46px]" icon={<Help />} />
      <Link w="w-[257px]" icon={<Eye />}>Hacer seguimiento a la tabla</Link>
      <Link w="w-[171px]" icon={<MoveCols />}>Mover columnas</Link>
      <Link w="w-[110px]" icon={<Wand />}>Normalizar</Link>
    </div>
    <div className="mt-[5px] flex h-[38px] items-center pl-[9px]">
      <Insert c="mt-[3px] size-5" /><span className="ml-[8px] w-[71px]">Agregar</span><Field /><span className="ml-[12px] w-[103px]">columna(s)</span>
      <span className="flex h-[30px] w-[207px] items-center justify-between rounded-[2px] border border-[#aaa] bg-white pr-[6px] pl-[8px] text-[#222]">después de plane_id<I c="size-[11px]" vb="0 0 11 11"><path d="m1 3 4.500 4.800L10 3" stroke="#222" strokeWidth="2" /></I></span>
      <span className="mt-[4px] ml-[12px]"><Btn w="w-[110px]">Continuar</Btn></span>
    </div>
    <section className="relative mt-[42px] ml-[4px] w-[1583px] shrink-0 rounded-[4px] border border-[#aaa] bg-[#eee] shadow-[inset_1px_1px_2px_#fff]">
      <Legend w="w-[113px]">Índices</Legend>
      <div className="mt-[37px] ml-[9px] w-[1140px]">
        <Head data={idxCols} h="h-[28px]" />
        <IdxRow name="PRIMARY" uniq="Sí" col="id_seat" card="18" bg="bg-white" />
        <IdxRow name="plane_id" uniq="No" col="plane_id" card="9" bg="bg-[#dfdfdf]" />
      </div>
      <div className="mt-[29px] flex h-[69px] items-center border-t border-[#aaa] bg-[#d3dce3] pb-px pl-[9px] text-black shadow-[inset_1px_1px_2px_#fff]">
        <span className="w-[153px]">Create an index on</span><Field h="h-[37px]" /><span className="ml-[14.500px] w-[65px]">columns</span>
        <span className="mt-[3px]"><Btn w="w-[110px]">Continuar</Btn></span>
      </div>
    </section>
    <section className="relative mt-[35px] ml-[4px] w-[1583px] shrink-0 rounded-[4px] border border-[#aaa] bg-[#eee] shadow-[inset_1px_1px_2px_#fff]">
      <Legend w="w-[146px]">Particiones</Legend>
      <div className="mt-[37px] mr-[9px] ml-[9px] flex h-[52px] items-center gap-[5px] rounded-[5px] border border-[#3a6c7e] bg-[#e8eef1] pl-[17px] text-black"><span className="mt-[3px]"><Warn /></span>¡Ninguna partición definida!</div>
      <div className="mt-[16px] flex h-[53px] items-start border-t border-[#aaa] bg-[#d3dce3] pt-[8px] pl-[9px] shadow-[inset_1px_1px_2px_#fff]"><Btn w="w-[171px]" b="font-normal">Tabla de divisiones</Btn></div>
    </section>
  </main>
);

/* ---------- Windows taskbar ---------- */
const Slot = ({ w, bar, on, children }) => (
  <div className={`relative flex h-full shrink-0 items-center justify-center ${w} ${on ? "bg-[#4d4b60]" : ""}`}>{children}{bar && <span className="absolute bottom-0 h-[3px] w-full bg-[#76b9ed]" />}</div>
);
const Taskbar = () => (
  <div className="flex h-[50px] shrink-0 items-center bg-[linear-gradient(to_right,#1d1d1d_0%,#1d1c20_33%,#1f1d30_42%,#221f3c_48%,#211e4c_58%,#1f1b2c_68%,#1d1c1e_78%,#1d1d1d_100%)] text-white">
    <span className="flex w-[60px] justify-center"><I c="size-5" vb="0 0 20 20"><path d="M0 2.800 8.200 1.700v7.700H0zM9.200 1.500 20 0v9.400H9.200zM0 10.500h8.200v7.800L0 17.200zM9.200 10.500H20V20L9.200 18.500z" fill="#fff" /></I></span>
    <div className="flex h-[50px] w-[430px] items-center border border-[#5a5a5a] bg-[#333] pl-[14px] text-[17px] tracking-[-0.15px] text-[#d5d5d5]">
      <I c="size-[21px]" vb="0 0 21 21"><circle cx="13" cy="7.500" r="6.500" stroke="#fff" strokeWidth="1.400" /><path d="M8.500 12.200.8 20" stroke="#fff" strokeWidth="1.400" /></I><span className="ml-[14px]">Escribe aquí para buscar</span>
    </div>
    <I c="ml-[20px] size-5" vb="0 0 20 20"><path d="M1 0v3h12V0M1 20v-3h12v3M1 6h12v8H1zM17.500 0v4M17.500 11v9" stroke="#fff" strokeWidth="1.500" /><rect x="16.500" y="6" width="2.500" height="3" fill="#fff" /></I>
    <span className="ml-[26px] h-[26px] w-[4px] border-x border-[#555]" />
    <Slot w="w-[87px]"><I c="h-[24px] w-[28px]" vb="0 0 28 24"><path d="M0 2c0-1 .6-2 2-2h8l3 3.500H0z" fill="#dd9b00" /><rect y="3" width="28" height="20" rx="1" fill="#ffd766" /><path d="M5 24v-8.500c0-1.500.8-2.500 2.500-2.500h13c1.700 0 2.500 1 2.500 2.500V24h-5v-5h-8v5z" fill="#3d94dc" /></I></Slot>
    <Slot w="w-[39px]"><I c="size-[31px]" vb="0 0 30 30"><circle cx="15" cy="15" r="14" fill="#25293a" stroke="#23c17c" strokeWidth="1.600" /><path d="m12 8-1.800 9.500c-.8 5 6 5.400 7 .6L19 8" stroke="#23c17c" strokeWidth="2.300" strokeLinecap="round" /></I></Slot>
    <Slot w="w-[84px]"><I c="size-[27px]" vb="0 0 27 27"><circle cx="14" cy="13" r="12.800" fill="#d9251f" /><circle cx="14.500" cy="12.500" r="9.500" fill="#f3dcd8" /><circle cx="15.500" cy="12.500" r="7.200" fill="#d9251f" /><path d="M19 10a4.400 4.400 0 1 0 0 5.400" stroke="#fff" strokeWidth="2.400" /><path d="M12 5 8.500 14" stroke="#2c6db5" strokeWidth="2.500" /><path d="m9 12.500 3 2.500-3.500 8c-3.500 1-7-.5-8.500-2.500z" fill="#ecc79a" /></I></Slot>
    <Slot w="w-[38px]"><I c="h-[24px] w-[22px]" vb="0 0 22 24"><path d="M11 1.500c3 1.800 6 2.500 9 2.500v8c0 5.500-4.500 8.500-9 10.500-4.500-2-9-5-9-10.500V4c3 0 6-.7 9-2.500z" fill="#0d2b4a" stroke="#1488ff" strokeWidth="2.600" /><path d="M2 12v-1c0 6 4 9.500 9 11.500" stroke="#1fe0e8" strokeWidth="2.600" /><path d="M15.500 7.500 6 10l3 2-4 6 6-4 2 2.500z" fill="#1fe0e8" /></I></Slot>
    <span className="w-[13px]" />
    <Slot w="w-[61px]" bar on><I c="size-[28px]" vb="0 0 28 28"><path d="M14 14 1.900 7A14 14 0 0 1 26.100 7z" fill="#db4437" /><path d="M14 14v0L14 28A14 14 0 0 1 1.900 7L8 17.500z" fill="#0f9d58" /><path d="M14 7h12.100A14 14 0 0 1 14 28l6-10.500z" fill="#ffcd40" /><circle cx="14" cy="14" r="6.500" fill="#f1f1f1" /><circle cx="14" cy="14" r="5.200" fill="#4285f4" /></I></Slot>
    <span className="w-[6px]" />
    <Slot w="w-[51px]" bar><I c="h-[26px] w-[28px]" vb="0 0 28 26"><path d="m10 3 8-2.500 9 2V16l-8 4-9-3z" fill="#bdbdbd" /><path d="m19 5.500 8-3V16l-8 4z" fill="#e3e3e3" /><path d="m10 3 9 2.500V14H10z" fill="#3a3a3a" /><rect x="12" y="8" width="2.500" height="2.500" fill="#3fd64a" /><path d="M1 15.500 5 13h11l3 3v7l-5 2.500L1 22z" fill="#c9c9c9" /><circle cx="5" cy="18.500" r="1.900" fill="#666" /><circle cx="12" cy="19" r="1.900" fill="#666" /></I></Slot>
    <span className="w-[11px]" />
    <Slot w="w-[51px]" bar><span className="mr-[2px] flex size-[30px] items-center justify-center rounded-[3px] border-t-2 border-[#fbb278] bg-[#f37623]"><I c="size-[24px]" vb="0 0 24 24"><path d="M9 12c-4 0-6-1.500-6-4s2-4.500 4.500-4.500S11.500 5 12 7c.5-2 2-3.500 4.500-3.500S21 5.500 21 8s-2 4-6 4c4 0 6 1.500 6 4s-2 4.500-4.500 4.500S12.500 19 12 17c-.5 2-2 3.500-4.500 3.500S3 18.500 3 16s2-4 6-4zM9 12h6" stroke="#fff" strokeWidth="3.200" strokeLinejoin="round" /></I></span></Slot>
    <span className="w-[11px]" />
    <Slot w="w-[51px]" bar><I c="mr-[3px] h-[27px] w-[28px]" vb="0 0 28 27"><path d="M10 1h16l.8 23-3 2.500z" fill="#e8e4cf" /><path d="M9.500 2H25l-1.500 23L.5 20.500z" fill="#5f9fb2" /><path d="M9.500 2H24l-2 9C15 9 10 14 3.500 15.500z" fill="#b4dbe4" /><path d="M10 1.500h15" stroke="#9aa" strokeWidth="2" strokeDasharray="1.500 1" /></I></Slot>
    <span className="w-[11px]" />
    <Slot w="w-[51px]" bar><I c="mr-[2px] size-[29px]" vb="0 0 29 29"><path d="M14 4C24 4 28 11 25.500 17c-1.500 4-4.500 1.500-6.500 4-1.500 2 0 4-4 4.500C7 26.500.5 21 .5 15.500.5 8 7 4 14 4z" fill="#cfe4f5" stroke="#8fb3d4" strokeWidth=".8" /><circle cx="6" cy="15" r="2.300" fill="#d9402f" /><circle cx="10" cy="9.500" r="2.300" fill="#4fae43" /><circle cx="16.500" cy="8" r="2.300" fill="#f2b21c" /><circle cx="13" cy="17" r="1.800" fill="#1f1f49" /><path d="M17 27 24.500 5" stroke="#c4762b" strokeWidth="2.400" /><path d="m22.500 7 1-6 5.500 1.500L26 8z" fill="#8b6a4a" /></I></Slot>
    <span className="grow" />
    <span className="h-[26px] w-[4px] border-x border-[#555]" />
    <span className="ml-[17px] flex h-[24px] w-[48px] items-center justify-center border-2 border-white bg-[linear-gradient(to_right,#06c35f_52%,#444_52%)] text-[14px] tracking-[-0.5px] outline outline-[#666] [text-shadow:1px_1px_1px_#333]">44%</span><span className="h-[12px] w-[4px] bg-white" />
    <I c="ml-[15px] h-[9px] w-[16px]" vb="0 0 16 9"><path d="m.7 8.500 7.300-7.300 7.300 7.300" stroke="#fff" strokeWidth="1.400" /></I>
    <I c="ml-[14px] size-[17px]" vb="0 0 17 17"><path d="M1 16C1 7 7 1.500 16 1.500M5 16C5 9.500 9.500 5.500 16 5.500M9 16c0-4 3-6.500 7-6.500" stroke="#ddd" strokeWidth="1.300" /><circle cx="14.500" cy="14.500" r="1.800" fill="#fff" /></I>
    <I c="ml-[11px] h-[16px] w-[21px]" vb="0 0 21 16"><path d="M.7 5.500h3L7.500 1.500v13L3.700 10.500h-3z" stroke="#fff" strokeWidth="1.200" /><path d="M10.500 5.500a4 4 0 0 1 0 5M13.500 3.500c2 2.500 2 6.500 0 9" stroke="#fff" strokeWidth="1.200" /><path d="M16.500 1.500c3 4 3 9 0 13" stroke="#777" strokeWidth="1.200" /></I>
    <span className="ml-[14px] w-[42px] text-[14px] tracking-[-0.3px]">ESP</span>
    <span className="w-[75px] text-center text-[14.300px] leading-[23px] tracking-[-0.200px] whitespace-nowrap">17:16<br />07/07/2021</span>
    <I c="ml-[25px] size-[21px]" vb="0 0 21 21"><path d="M.7.7h19.600v15.600h-7L10.500 19.200 7.700 16.300h-7z" stroke="#fff" strokeWidth="1.400" /></I>
    <span className="ml-[24px] h-full w-px bg-[#777]" /><span className="w-[5px]" />
  </div>
);

export default function App() {
  return (
    <div className={`flex h-[1080px] w-[1920px] flex-col overflow-hidden ${UI}`}>
      <TabStrip />
      <Toolbar />
      <Bookmarks />
      <div className="relative flex h-[901px] shrink-0 overflow-hidden font-['Liberation_Sans',sans-serif] text-[16.4px] leading-[19px]">
        <Sidebar />
        <Main />
        <div className="flex w-[21px] flex-col items-center bg-[#f1f1f1]">
          <I c="mt-[9px] h-[5px] w-[9px]" vb="0 0 9 5"><path d="M4.500 0 9 5H0z" fill="#a3a3a3" /></I>
          <div className="mt-[7px] h-[621px] w-[17px] bg-[#c1c1c1]" />
          <I c="mt-auto mb-[8px] h-[5px] w-[9px]" vb="0 0 9 5"><path d="M0 0h9L4.500 5z" fill="#505050" /></I>
        </div>
        <div className="absolute bottom-0 left-[304px] flex h-[26px] w-[98px] items-center gap-[6px] rounded-tr-[3px] border-t border-r border-[#aaa] bg-[#ccc] pt-[3px] pl-[9px] text-[#444]">
          <span className="flex size-[17px] shrink-0 items-center justify-center border border-[#eee] bg-[#ddd]"><span className="h-[10px] w-[13px] bg-gradient-to-br from-[#222] to-[#444]" /></span>Consola
        </div>
      </div>
      <Taskbar />
    </div>
  );
}
